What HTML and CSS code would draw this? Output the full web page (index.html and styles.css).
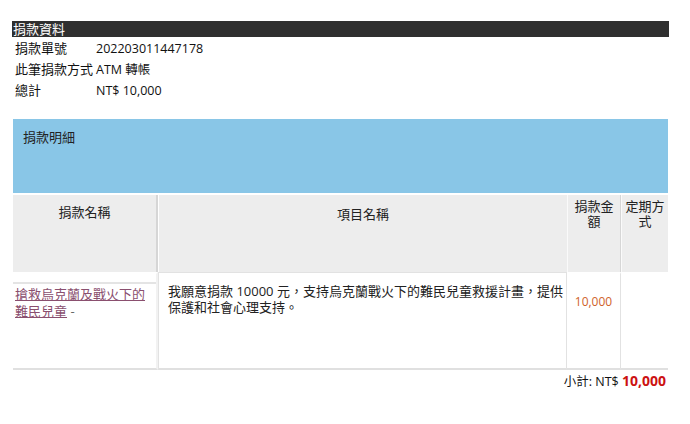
FILE: index.html
```html
<!DOCTYPE html>
<html lang="zh-Hant">
<head>
<meta charset="utf-8">
<link rel="stylesheet" href="styles.css">
</head>
<body>
<div class="page">
  <div class="bar">捐款資料</div>
  <div class="info">
    <div class="row"><span class="label">捐款單號</span><span class="val">202203011447178</span></div>
    <div class="row"><span class="label">此筆捐款方式</span><span class="val">ATM 轉帳</span></div>
    <div class="row"><span class="label">總計</span><span class="val">NT$ 10,000</span></div>
  </div>
  <div class="detail-head">捐款明細</div>
  <table class="grid">
    <colgroup>
      <col class="c1"><col class="c2"><col class="c3"><col class="c4">
    </colgroup>
    <thead>
      <tr>
        <th class="h1">捐款名稱</th>
        <th class="h2">項目名稱</th>
        <th class="h3">捐款金額</th>
        <th class="h4">定期方式</th>
      </tr>
    </thead>
    <tbody>
      <tr>
        <td class="d1"><div class="d1in"><a class="plink" href="#">搶救烏克蘭及戰火下的難民兒童</a> <span class="dash">-</span></div></td>
        <td class="d2">我願意捐款 10000 元，支持烏克蘭戰火下的難民兒童救援計畫，提供保護和社會心理支持。</td>
        <td class="d3">10,000</td>
        <td class="d4"></td>
      </tr>
    </tbody>
  </table>
  <div class="subtotal">小計: NT$ <b>10,000</b></div>
</div>
</body>
</html>
```
FILE: styles.css
```css
html, body {
  margin: 0;
  padding: 0;
  background: #fff;
}
body {
  font-family: "Open Sans", "Noto Sans CJK TC", sans-serif;
  font-size: 12px;
  color: #222;
}
.page {
  margin: 21px 0 0 12px;
  width: 657px;
}
.bar {
  background: #2f2f2f;
  color: #fff;
  height: 16px;
  line-height: 16px;
  font-size: 13px;
  padding-left: 1px;
}
.info {
  padding: 1px 0 0 3px;
}
.row {
  display: flex;
  height: 21px;
  line-height: 21px;
  font-size: 12.5px;
  color: #111;
}
.label {
  width: 81px;
  font-size: 13px;
}
.detail-head {
  margin-top: 18px;
  margin-left: 1px;
  width: 655px;
  height: 74px;
  box-sizing: border-box;
  background: #89c6e7;
  padding: 9px 10px;
  font-size: 13px;
  line-height: 18px;
  color: #222;
}
.grid {
  margin-left: 1px;
  width: 655px;
  table-layout: fixed;
  border-collapse: separate;
  border-spacing: 0;
  margin-top: 2px;
}
.c1 { width: 145px; }
.c2 { width: 409px; }
.c3 { width: 54px; }
.c4 { width: 47px; }
.grid th {
  background: #ededed;
  font-weight: normal;
  font-size: 13px;
  line-height: 15px;
  color: #222;
  height: 77px;
  box-sizing: border-box;
  vertical-align: top;
  padding: 10px 2px 0;
  text-align: center;
}
.h1 { border-right: 2px solid #d6d6d6; }
.h2 { border-left: 1px solid #fff; padding-top: 12px !important; }
.h3, .h4 { border-left: 1px solid #fafafa; padding-top: 4px !important; }
.h3 { border-right: 1px solid #d6d6d6; }
.grid td {
  height: 98px;
  box-sizing: border-box;
  vertical-align: top;
  font-size: 13px;
  line-height: 16px;
  border-top: 2px solid transparent;
  border-bottom: 2px solid #e0e0e0;
}
.d1 {
  padding: 8px 0 0 0;
  border-right: 2px solid #f2f2f2;
}
.d1in {
  border-top: 2px solid #e4e4e4;
  padding: 2px 0 0 2px;
  line-height: 16.5px;
}
.plink {
  color: #8a4f6f;
  text-decoration: underline;
}
.dash { color: #666; }
.d2 {
  border-left: 1px solid #e2e2e2;
  border-top: 1px solid #e2e2e2 !important;
  border-right: 1px solid #e2e2e2;
  padding: 10px 2px 0 9px;
  color: #222;
}
.d3 {
  text-align: center;
  color: #d0622a;
  font-size: 12px !important;
  padding-top: 20px;
  border-right: 1px solid #e2e2e2;
}
.subtotal {
  text-align: right;
  padding-right: 3px;
  margin-top: 1px;
  font-size: 12.5px;
  color: #111;
}
.subtotal b {
  color: #cc1111;
  font-size: 14px;
}
```
